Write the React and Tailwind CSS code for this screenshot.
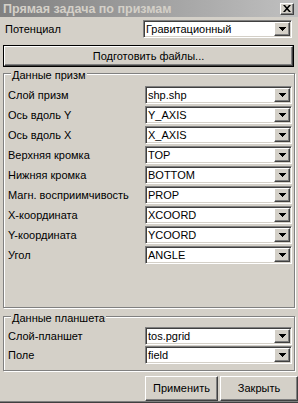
import React from "react";

const raised =
  "border border-t-white border-l-white border-r-[#404040] border-b-[#404040] shadow-[inset_-1px_-1px_0_#808080] bg-[#d4d0c8]";
const sunken =
  "border border-t-[#808080] border-l-[#808080] border-r-white border-b-white shadow-[inset_1px_1px_0_#404040,inset_-1px_-1px_0_#d4d0c8]";

function Arrow() {
  return (
    <svg width="7" height="4" viewBox="0 0 7 4" className="block">
      <path d="M0 0h7v1H6v1H5v1H4v1H3V3H2V2H1V1H0z" fill="#000" />
    </svg>
  );
}

function Combo({ value, width = "w-[147px]" }) {
  return (
    <div className={`flex h-[18px] shrink-0 items-stretch bg-white ${width} ${sunken}`}>
      <div className="flex-1 truncate pl-[2px] pt-[1px] leading-[14px] text-black">{value}</div>
      <div className={`m-[1px] flex w-[16px] items-center justify-center ${raised}`}>
        <Arrow />
      </div>
    </div>
  );
}

function Row({ label, value }) {
  return (
    <div className="flex h-[18px] items-center justify-between pl-[3px] pr-[2px]">
      <span className="leading-[14px]">{label}</span>
      <Combo value={value} />
    </div>
  );
}

function Group({ title, className, children }) {
  return (
    <div
      className={`relative ml-[3px] w-[292px] border border-[#808080] shadow-[inset_1px_1px_0_#fff,1px_1px_0_#fff] ${className}`}
    >
      <span className="absolute -top-[6px] left-[7px] bg-[#d4d0c8] px-[1px] leading-[14px]">{title}</span>
      {children}
    </div>
  );
}

const prisms = [
  ["Слой призм", "shp.shp"],
  ["Ось вдоль Y", "Y_AXIS"],
  ["Ось вдоль X", "X_AXIS"],
  ["Верхняя кромка", "TOP"],
  ["Нижняя кромка", "BOTTOM"],
  ["Магн. восприимчивость", "PROP"],
  ["X-координата", "XCOORD"],
  ["Y-координата", "YCOORD"],
  ["Угол", "ANGLE"],
];

export default function App() {
  return (
    <div
      className="flex h-[403px] w-[298px] flex-col overflow-hidden bg-[#d4d0c8] text-[11px] text-black shadow-[inset_0_-1px_0_#404040,inset_0_-2px_0_#808080]"
      style={{ fontFamily: '"Liberation Sans", Arial, sans-serif' }}
    >
      <div className="flex h-[17px] shrink-0 items-center justify-between bg-gradient-to-r from-[#808080] to-[#c0c0c0] pl-[3px] pr-[4px]">
        <span className="text-[12.5px] font-bold leading-[14px] text-[#d4d0c8]">Прямая задача по призмам</span>
        <div className={`flex h-[12px] w-[14px] items-center justify-center ${raised}`}>
          <svg width="8" height="7" viewBox="0 0 8 7" className="block">
            <path d="M0 0h2l2 2.3L6 0h2L5 3.5 8 7H6L4 4.7 2 7H0l3-3.5z" fill="#000" />
          </svg>
        </div>
      </div>

      <div className="mt-[3px] flex h-[18px] items-center justify-between pl-[5px] pr-[6px]">
        <span className="leading-[14px]">Потенциал</span>
        <Combo value="Гравитационный" width="w-[149px]" />
      </div>

      <div className="ml-[3px] mt-[7px] h-[22px] w-[291px] border border-black">
        <div className={`flex h-full items-center justify-center ${raised}`}>Подготовить файлы...</div>
      </div>

      <Group title="Данные призм" className="mt-[6px] h-[235px]">
        <div className="flex flex-col gap-[2px] pl-[1px] pt-[12px]">
          {prisms.map(([label, value]) => (
            <Row key={label} label={label} value={value} />
          ))}
        </div>
      </Group>

      <Group title="Данные планшета" className="mt-[8px] h-[55px]">
        <div className="flex flex-col gap-[1px] pl-[1px] pt-[10px]">
          <Row label="Слой-планшет" value="tos.pgrid" />
          <Row label="Поле" value="field" />
        </div>
      </Group>

      <div className="mt-[5px] flex h-[25px] justify-end gap-[2px]">
        <button className={`w-[73px] ${raised}`}>Применить</button>
        <button className={`w-[78px] ${raised}`}>Закрыть</button>
      </div>
    </div>
  );
}
